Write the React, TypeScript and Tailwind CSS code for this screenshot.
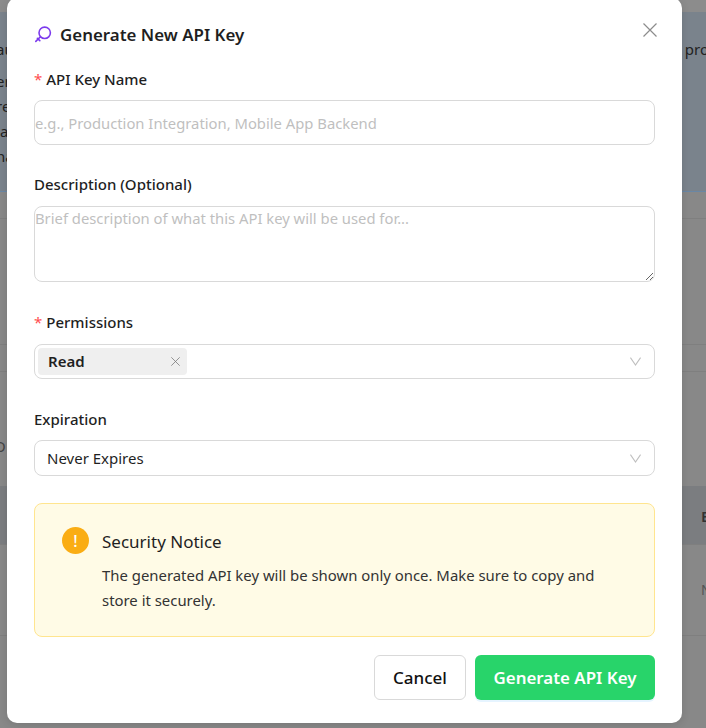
function KeyIcon() {
  return (
    <svg className="w-[18px] h-[18px] shrink-0" viewBox="0 0 18 18" fill="none" stroke="#7c3aed" strokeWidth={1.6} strokeLinecap="round">
      <circle cx="10.7" cy="7.8" r="5.7" />
      <path d="M6.4 11.8 L1.8 16.4" />
      <path d="M3.4 13.4 L5.8 15.6" />
    </svg>
  );
}

function CloseIcon({ className }: { className: string }) {
  return (
    <svg className={className} viewBox="0 0 14 14" fill="none" stroke="currentColor" strokeWidth={1.2}>
      <path d="M0.5 0.5 L13.5 13.5 M13.5 0.5 L0.5 13.5" />
    </svg>
  );
}

function Chevron() {
  return (
    <svg className="w-[11px] h-[9px] shrink-0 text-[#bfbfbf]" viewBox="0 0 11 9" fill="none" stroke="currentColor" strokeWidth={1.1}>
      <path d="M0.4 0.6 L5.5 8 L10.6 0.6" />
    </svg>
  );
}

function Label({ text, required }: { text: string; required?: boolean }) {
  return (
    <label className="flex items-center h-[22px] pb-[2px] text-[15px] font-medium text-[#1f1f1f]">
      {required && <span className="text-[#ff4d4f] mr-[4px] font-normal">*</span>}
      {text}
    </label>
  );
}

export default function App() {
  return (
    <div className="relative w-[706px] h-[728px] overflow-hidden bg-[#888888] font-['Noto_Sans',sans-serif]">
      {/* page behind the dialog */}
      <div className="h-3 bg-[#8c8c8c]" />
      <div className="h-[180px] bg-[#7a838c] border-b border-[#6a87a5] pt-[25px] text-[15px] leading-[25px] text-[#222]">
        <div className="flex justify-between"><span className="-ml-[4px]">au</span><span className="mr-[-3px]">pro</span></div>
        <div className="mt-[7px] -ml-[4px]">er</div>
        <div className="-ml-[4px]">re</div>
        <div>a</div>
        <div className="-ml-[4px]">na</div>
      </div>
      <div className="h-[27px] border-b border-[#7f7f7f]" />
      <div className="h-[126px] border-b border-[#7f7f7f]" />
      <div className="h-[27px] border-b border-[#7f7f7f]" />
      <div className="h-[64px] pt-[64px] -ml-[6px] text-[15px] leading-[20px] text-[#444]">O</div>
      <div className="h-[50px]" />
      <div className="h-[59px] flex justify-end items-center pt-[2px] bg-[#7b7d80] border-b border-[#7f7f7f] text-[15px] font-semibold text-[#333]">
        <span className="w-[5px] overflow-hidden">E</span>
      </div>
      <div className="h-[91px] flex justify-end items-center pb-[2px] border-b border-[#7f7f7f] text-[14px] text-[#555]">
        <span className="w-[5px] overflow-hidden">N</span>
      </div>

      {/* dialog */}
      <div className="absolute left-[7px] top-[-2px] w-[675px] h-[725px] bg-white rounded-[10px] px-[27px] pt-[24px] shadow-[0_2px_8px_rgba(0,0,0,0.12)]">
        <button className="absolute right-[25px] top-[25px] text-[#8c8c8c]">
          <CloseIcon className="w-[14px] h-[14px]" />
        </button>

        <div className="flex items-center gap-[8px] h-[24px] text-[16.9px] font-semibold text-[#1f1f1f]">
          <KeyIcon />
          <span className="pt-[2px]">Generate New API Key</span>
        </div>

        <div className="mt-[23px]">
          <Label text="API Key Name" required />
        </div>
        <input
          placeholder="e.g., Production Integration, Mobile App Backend"
          className="block mt-[9px] w-full h-[45px] border border-[#d9d9d9] rounded-lg text-[14.8px] placeholder:text-[#bfbfbf] outline-none"
        />

        <div className="mt-[29px]">
          <Label text="Description (Optional)" />
        </div>
        <textarea
          placeholder="Brief description of what this API key will be used for..."
          className="block mt-[10px] w-full h-[76px] border border-[#d9d9d9] rounded-lg text-[14.8px] leading-[22px] placeholder:text-[#bfbfbf] outline-none"
        />

        <div className="mt-[30px]">
          <Label text="Permissions" required />
        </div>
        <div className="mt-[10px] h-[35px] flex items-center border border-[#d9d9d9] rounded-lg pl-[3px] pr-[13px]">
          <div className="w-[149px] h-[27px] flex items-center justify-between bg-[#efefef] rounded pl-[10px] pr-[7px] text-[15px] font-semibold text-[#1f1f1f]">
            Read
            <CloseIcon className="w-[9px] h-[9px] text-[#777]" />
          </div>
          <div className="ml-auto"><Chevron /></div>
        </div>

        <div className="mt-[30px]">
          <Label text="Expiration" />
        </div>
        <div className="mt-[9px] h-[36px] flex items-center justify-between border border-[#d9d9d9] rounded-lg pl-[12px] pr-[13px] text-[15px] text-[#1f1f1f]">
          Never Expires
          <Chevron />
        </div>

        <div className="mt-[27px] h-[134px] flex gap-[13px] bg-[#fffbe6] border border-[#ffe58f] rounded-lg pl-[27px] pr-[40px] pt-[23px]">
          <div className="shrink-0 w-[27px] h-[27px] rounded-full bg-[#faad14] text-white flex items-center justify-center text-[16px] font-medium">!</div>
          <div className="pt-[1px]">
            <div className="text-[17px] leading-[28px] text-[#1f1f1f]">Security Notice</div>
            <div className="mt-[7px] text-[14.9px] leading-[25px] text-[#333]">
              The generated API key will be shown only once. Make sure to copy and store it securely.
            </div>
          </div>
        </div>

        <div className="mt-[18px] flex justify-end gap-[9px]">
          <button className="w-[92px] h-[45px] border border-[#d9d9d9] rounded-md bg-white text-[17px] font-medium text-[#111]">Cancel</button>
          <button className="w-[180px] h-[45px] rounded-md bg-[#28d46a] shadow-[0_2px_0_rgba(5,145,255,0.1)] text-[16.9px] font-semibold text-white">Generate API Key</button>
        </div>
      </div>
    </div>
  );
}
